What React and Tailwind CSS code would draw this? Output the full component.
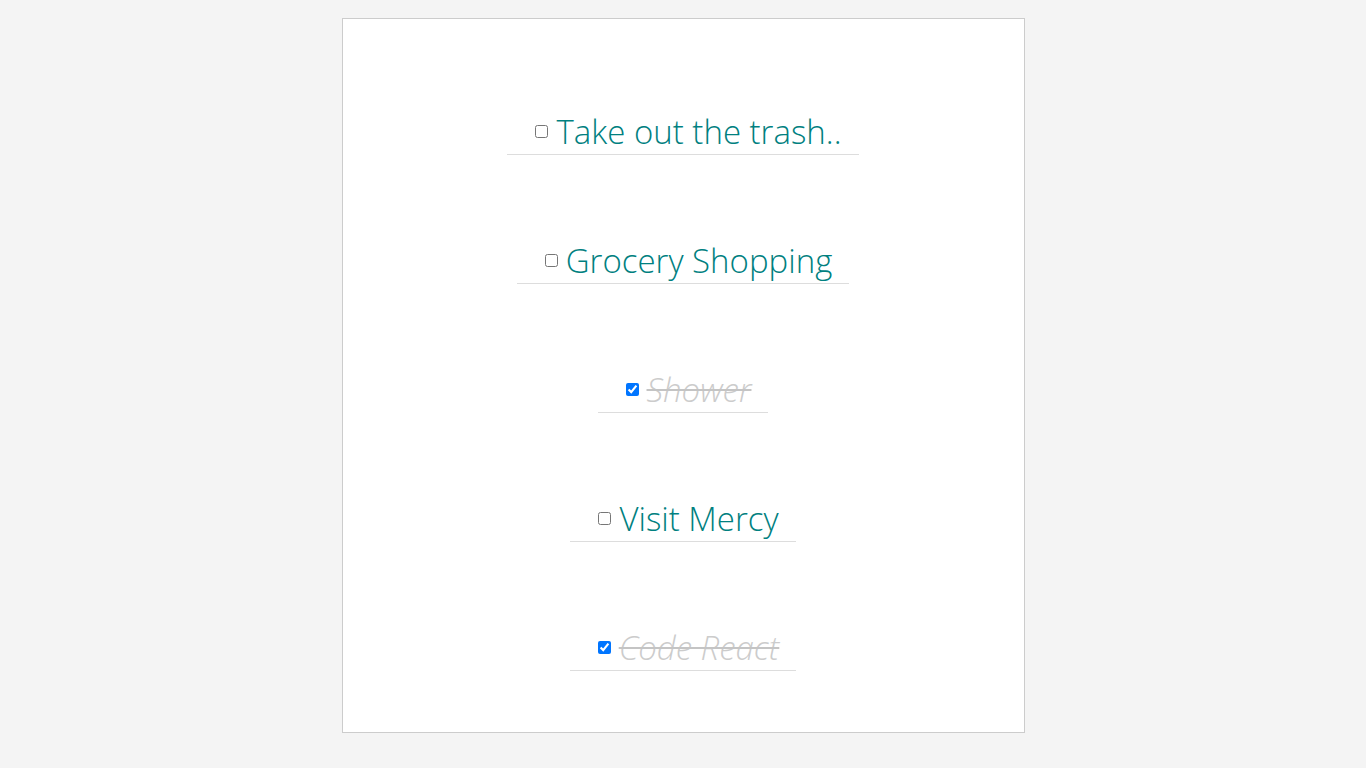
import React, { useState } from 'react';

function App() {
  const [todos, setTodos] = useState([
    { id: 1, title: 'Take out the trash..', completed: false },
    { id: 2, title: 'Grocery Shopping', completed: false },
    { id: 3, title: 'Shower', completed: true },
    { id: 4, title: 'Visit Mercy', completed: false },
    { id: 5, title: 'Code React', completed: true }
  ]);

  const toggle = (id) => {
    setTodos(todos.map(t => (t.id === id ? { ...t, completed: !t.completed } : t)));
  };

  return (
    <div className="min-h-screen bg-[#f4f4f4] pt-[18px]" style={{ fontFamily: '"Open Sans", sans-serif' }}>
      <div className="mx-auto w-[683px] h-[715px] bg-white border border-[#cccccc] flex flex-col items-center gap-[77px] pt-[84px]">
        {todos.map(todo => (
          <div key={todo.id} className="inline-flex items-center border-b border-[#dddddd] pl-[24px] pr-[17px] pt-[6px]">
            <input
              type="checkbox"
              checked={todo.completed}
              onChange={() => toggle(todo.id)}
              className="m-[3px] ml-[4px] mr-[8px]"
            />
            <span
              className={`text-[33px] leading-[45px] font-light ${
                todo.completed ? 'text-[#cccccc] italic line-through decoration-2 decoration-[#c4c4c4]' : 'text-[#008080]'
              }`}
            >
              {todo.title}
            </span>
          </div>
        ))}
      </div>
    </div>
  );
}

export default App;
